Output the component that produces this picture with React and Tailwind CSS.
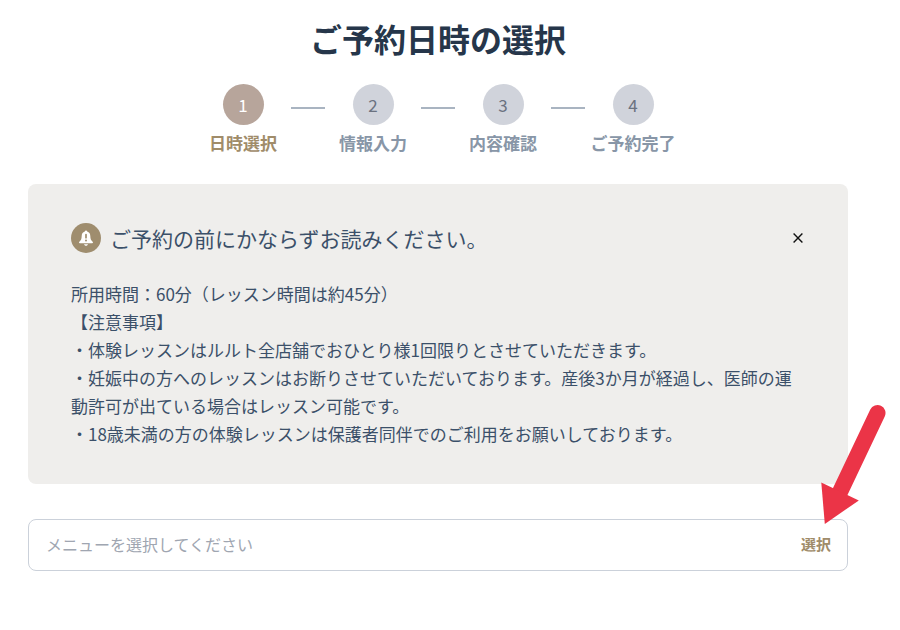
import React from 'react';

const steps = ['日時選択', '情報入力', '内容確認', 'ご予約完了'];

const notes = [
    '所用時間：60分（レッスン時間は約45分）',
    '【注意事項】',
    '・体験レッスンはルルト全店舗でおひとり様1回限りとさせていただきます。',
    '・妊娠中の方へのレッスンはお断りさせていただいております。産後3か月が経過し、医師の運動許可が出ている場合はレッスン可能です。',
    '・18歳未満の方の体験レッスンは保護者同伴でのご利用をお願いしております。',
];

const Stepper = ({ current }) => {
    return (
        <ol className="mt-[26px] flex justify-center">
            {steps.map((label, index) => {
                const active = index === current;
                return (
                    <li key={label} className="flex items-start">
                        {/* Connector to the previous step */}
                        {index > 0 && <span className="mt-[23px] h-0.5 w-[34px] bg-[#a9b4c1]" />}
                        <div className="flex w-24 flex-col items-center">
                            <span
                                className={`flex size-[41px] items-center justify-center rounded-full text-[17px] ${
                                    active ? 'bg-[#b7a59b] text-white' : 'bg-[#d0d3db] text-[#6b7280]'
                                }`}
                            >
                                {index + 1}
                            </span>
                            <span
                                className={`mt-1.5 whitespace-nowrap text-[17px] font-bold leading-6 ${
                                    active ? 'text-[#a08c6a]' : 'text-[#8896a7]'
                                }`}
                            >
                                {label}
                            </span>
                        </div>
                    </li>
                );
            })}
        </ol>
    );
};

const BellIcon = () => {
    return (
        <svg viewBox="0 0 30 30" className="size-[30px] shrink-0" aria-hidden="true">
            <circle cx="15" cy="15" r="15" fill="#9f8d6e" />
            <path
                d="M15 7.6c.7 0 1.1.4 1.2 1 2 .6 3 2.2 3.1 4.3.1 2.6.5 4 1.9 5.3.6.6.8 1 .8 1.3 0 .5-.4.8-.9.8H8.9c-.5 0-.9-.3-.9-.8 0-.3.2-.7.8-1.3 1.4-1.3 1.8-2.7 1.9-5.3.1-2.1 1.1-3.700 3.1-4.300.1-.6.5-1 1.2-1z"
                fill="#fff"
            />
            <path d="M13 21.300h4c-.2.9-1 1.500-2 1.500s-1.800-.6-2-1.500z" fill="#fff" />
            <path d="M15 11.700v3" stroke="#9f8d6e" strokeWidth="1.700" strokeLinecap="round" />
            <circle cx="15" cy="17.500" r="1" fill="#9f8d6e" />
        </svg>
    );
};

const Notice = () => {
    return (
        <section className="mt-[29px] rounded-lg bg-[#efeeec] px-[43px] pb-9 pt-[39px] text-[#3b5069]">
            <div className="flex items-center">
                <BellIcon />
                <h2 className="ml-[9px] flex-1 text-[21px] leading-7">ご予約の前にかならずお読みください。</h2>
                <button type="button" aria-label="閉じる" className="flex size-3.5 items-center justify-center">
                    <svg viewBox="0 0 10 10" className="size-2.5" fill="none" stroke="#111" strokeWidth="1.4">
                        <path d="M.6.6l8.8 8.8M9.4.6L.6 9.4" />
                    </svg>
                </button>
            </div>
            <div className="mt-[27px] text-[17px] leading-7">
                {notes.map((note) => (
                    <p key={note}>{note}</p>
                ))}
            </div>
        </section>
    );
};

const MenuPicker = () => {
    return (
        <div className="relative mt-[35px]">
            <div className="flex h-[52px] items-center rounded-lg border border-[#cbd1da] pb-0.5 pl-[17px] pr-4">
                <input
                    type="text"
                    readOnly
                    aria-label="メニュー"
                    placeholder="メニューを選択してください"
                    className="min-w-0 flex-1 bg-transparent text-base leading-6 outline-none placeholder:text-[#a0a6b1]"
                />
                <button type="button" className="text-[15px] font-bold leading-6 text-[#a08c6a]">
                    選択
                </button>
            </div>

            {/* Arrow pointing at the select button */}
            <svg
                viewBox="0 0 70 126"
                className="pointer-events-none absolute -right-10 -top-[117px] h-[126px] w-[70px]"
                aria-hidden="true"
            >
                <path d="M59.5 11L22 90" stroke="#eb3447" strokeWidth="16" strokeLinecap="round" />
                <path d="M3.300 80.600L40.800 98.400 6.800 122z" fill="#eb3447" />
            </svg>
        </div>
    );
};

const App = () => {
    return (
        <main className="overflow-x-hidden bg-white pb-10 pl-7 pr-[52px] pt-[18px] font-['Noto_Sans_CJK_JP','Noto_Sans',sans-serif]">
            <h1 className="text-center text-[32px] font-bold leading-10 text-[#26364a]">ご予約日時の選択</h1>
            <Stepper current={0} />
            <Notice />
            <MenuPicker />
        </main>
    );
};

export default App;
